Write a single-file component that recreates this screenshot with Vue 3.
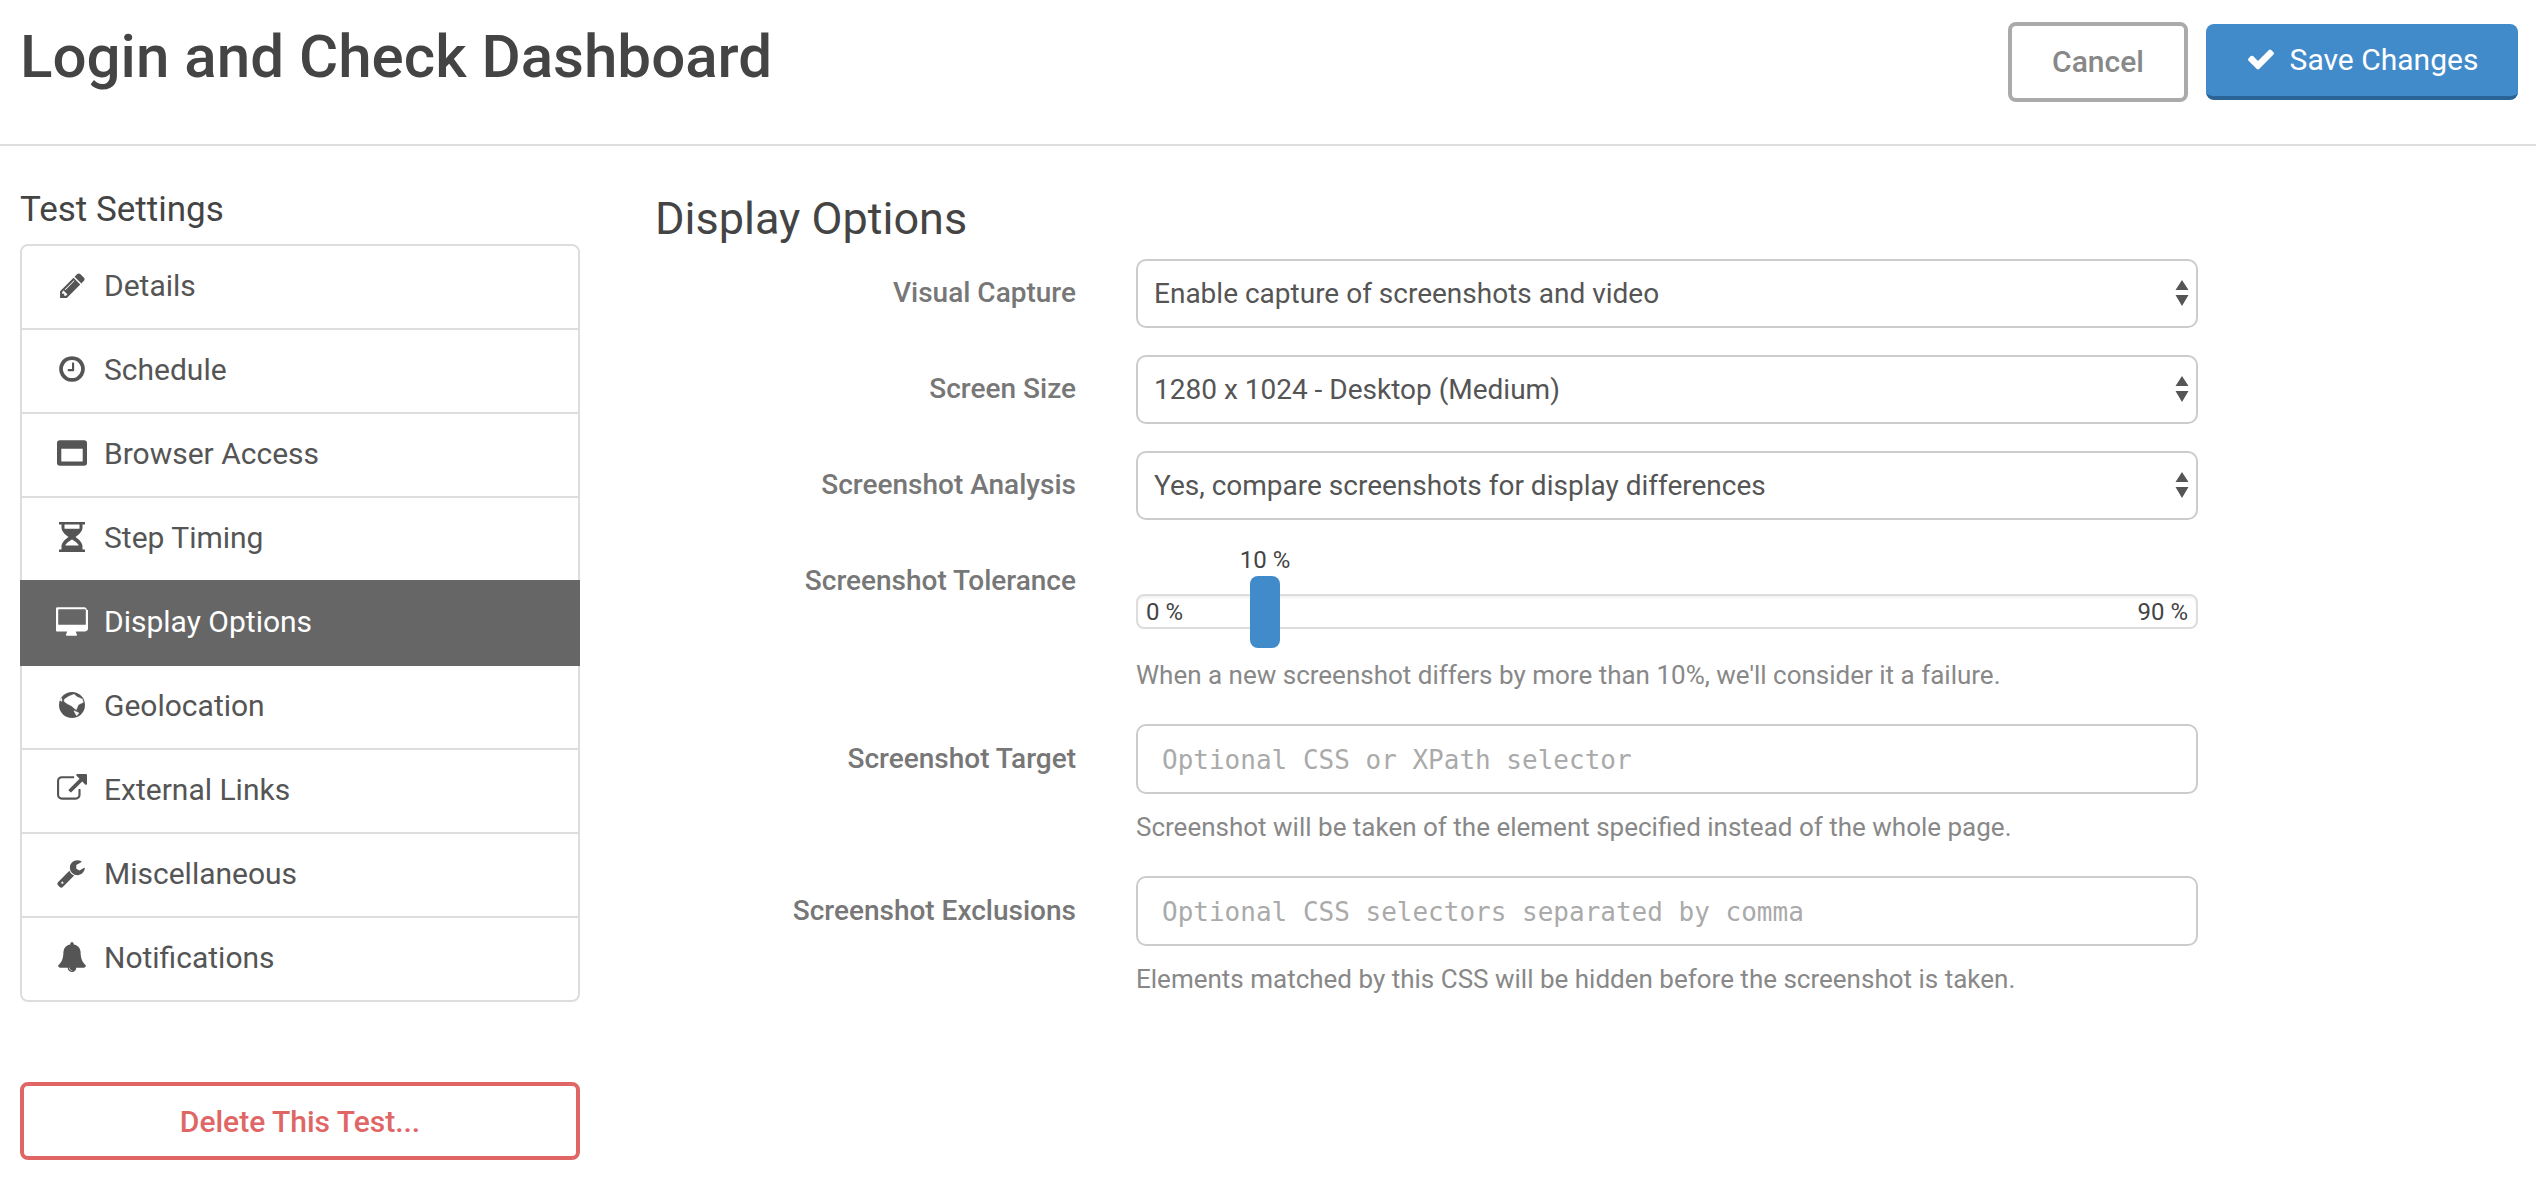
<script setup>
const nav = [
  { label: 'Details', icon: 'pencil' },
  { label: 'Schedule', icon: 'clock' },
  { label: 'Browser Access', icon: 'window' },
  { label: 'Step Timing', icon: 'hourglass' },
  { label: 'Display Options', icon: 'desktop', active: true },
  { label: 'Geolocation', icon: 'globe' },
  { label: 'External Links', icon: 'external' },
  { label: 'Miscellaneous', icon: 'wrench' },
  { label: 'Notifications', icon: 'bell' }
]
const selects = [
  { label: 'Visual Capture', value: 'Enable capture of screenshots and video' },
  { label: 'Screen Size', value: '1280 x 1024 - Desktop (Medium)' },
  { label: 'Screenshot Analysis', value: 'Yes, compare screenshots for display differences' }
]
const inputs = [
  { label: 'Screenshot Target', placeholder: 'Optional CSS or XPath selector', help: 'Screenshot will be taken of the element specified instead of the whole page.' },
  { label: 'Screenshot Exclusions', placeholder: 'Optional CSS selectors separated by comma', help: 'Elements matched by this CSS will be hidden before the screenshot is taken.' }
]
</script>

<template>
  <div class="page">
    <header class="header">
      <h1 class="title">Login and Check Dashboard</h1>
      <div class="actions">
        <button class="btn cancel">Cancel</button>
        <button class="btn save">
          <svg class="check" viewBox="0 0 1792 1792"><path d="M1671 566q0 40-28 68l-724 724-136 136q-28 28-68 28t-68-28l-136-136-362-362q-28-28-28-68t28-68l136-136q28-28 68-28t68 28l294 295 656-657q28-28 68-28t68 28l136 136q28 28 28 68z"/></svg>
          Save Changes
        </button>
      </div>
    </header>

    <div class="body">
      <aside class="sidebar">
        <h2 class="side-title">Test Settings</h2>
        <ul class="nav">
          <li v-for="item in nav" :key="item.label" class="nav-item" :class="{ active: item.active }">
            <span class="nav-icon">
              <svg v-if="item.icon === 'pencil'" width="29" height="29" viewBox="0 0 1792 1792"><path d="M491 1536l91-91-235-235-91 91v107h128v128h107zm523-928q0-22-22-22-10 0-17 7l-542 542q-7 7-7 17 0 22 22 22 10 0 17-7l542-542q7-7 7-17zm-54-192l416 416-832 832h-416v-416zm683 96q0 53-37 90l-166 166-416-416 166-165q36-38 90-38 53 0 91 38l235 234q37 39 37 91z"/></svg>
              <svg v-else-if="item.icon === 'clock'" width="30" height="30" viewBox="0 0 1792 1792"><path d="M1024 544v448q0 14-9 23t-23 9h-320q-14 0-23-9t-9-23v-64q0-14 9-23t23-9h224v-352q0-14 9-23t23-9h64q14 0 23 9t9 23zm416 352q0-148-73-273t-198-198-273-73-273 73-198 198-73 273 73 273 198 198 273 73 273-73 198-198 73-273zm224 0q0 209-103 385.500t-279.500 279.500-385.500 103-385.500-103-279.500-279.500-103-385.500 103-385.500 279.500-279.500 385.500-103 385.500 103 279.500 279.500 103 385.500z"/></svg>
              <svg v-else-if="item.icon === 'window'" width="30" height="30" viewBox="0 0 1792 1792"><path d="M256 1408h1280v-768h-1280v768zm1536-1120v1216q0 66-47 113t-113 47h-1472q-66 0-113-47t-47-113v-1216q0-66 47-113t113-47h1472q66 0 113 47t47 113z"/></svg>
              <svg v-else-if="item.icon === 'hourglass'" width="26" height="30" viewBox="0 0 26 30"><path d="M0 0h26v2.500h-2.500v3c0 4-3.500 7-7 9.500 3.500 2.500 7 5.500 7 9.500v3H26V30H0v-2.500h2.500v-3c0-4 3.500-7 7-9.500-3.500-2.500-7-5.500-7-9.500v-3H0z"/><path fill="#fff" d="M5.500 2.500h15v3c0 .5 0 .7-.1 1.200H5.600c-.1-.5-.1-.7-.1-1.200zM13 17.500c-3.500 2-6 4-6.800 6h13.600c-.8-2-3.300-4-6.800-6z"/></svg>
              <svg v-else-if="item.icon === 'desktop'" width="32" height="29" viewBox="0 0 1856 1664"><path d="M1728 992v-832q0-13-9.500-22.500t-22.500-9.500h-1536q-13 0-22.500 9.500t-9.500 22.500v832q0 13 9.500 22.500t22.500 9.500h1536q13 0 22.500-9.500t9.500-22.500zm128-832v1088q0 66-47 113t-113 47h-544q0 37 16 77.500t32 71 16 43.500q0 26-19 45t-45 19h-512q-26 0-45-19t-19-45q0-14 16-44t32-70 16-78h-544q-66 0-113-47t-47-113v-1088q0-66 47-113t113-47h1536q66 0 113 47t47 113z"/></svg>
              <svg v-else-if="item.icon === 'globe'" width="26" height="26" viewBox="0 0 26 26"><circle cx="13" cy="13" r="13"/><path fill="#fff" stroke="#fff" stroke-width=".5" stroke-linejoin="round" d="M5.700 7L10 4.300 15 2.300l3.300 2.700 5 2 1 3.300-5 2.400-2 5-2.300-1.700-2.700-2.300-4-2-3.300-2.400zM15 18.700l5 2.300-2.300 2.700-1.700-2.700zM.7 8.300L2.700 6 3 9.300z"/></svg>
              <svg v-else-if="item.icon === 'external'" width="30" height="30" viewBox="0 0 1792 1792"><path d="M1408 928v320q0 119-84.500 203.500t-203.500 84.500h-832q-119 0-203.500-84.500t-84.500-203.500v-832q0-119 84.500-203.500t203.500-84.500h704q14 0 23 9t9 23v64q0 14-9 23t-23 9h-704q-66 0-113 47t-47 113v832q0 66 47 113t113 47h832q66 0 113-47t47-113v-320q0-14 9-23t23-9h64q14 0 23 9t9 23zm384-864v512q0 26-19 45t-45 19-45-19l-176-176-652 652q-10 10-23 10t-23-10l-114-114q-10-10-10-23t10-23l652-652-176-176q-19-19-19-45t19-45 45-19h512q26 0 45 19t19 45z"/></svg>
              <svg v-else-if="item.icon === 'wrench'" width="30" height="30" viewBox="0 0 1792 1792"><path d="M384 1472q0-26-19-45t-45-19-45 19-19 45 19 45 45 19 45-19 19-45zm644-420l-682 682q-37 37-90 37-52 0-91-37l-106-108q-38-36-38-90 0-53 38-91l681-681q39 98 114.500 173.500t173.500 114.500zm634-435q0 39-23 106-47 134-164.500 217.500t-258.500 83.500q-185 0-316.500-131.500t-131.500-316.500 131.500-316.500 316.500-131.500q58 0 121.500 16.500t107.500 46.500q16 11 16 28t-16 28l-293 169v224l193 107q5-3 79-48.500t135.500-81 70.500-35.500q15 0 23.500 10t8.500 25z"/></svg>
              <svg v-else-if="item.icon === 'bell'" width="30" height="32" viewBox="0 0 1792 1792"><path d="M912 1696q0-16-16-16-59 0-101.500-42.500t-42.500-101.500q0-16-16-16t-16 16q0 73 51.500 124.500t124.500 51.500q16 0 16-16zm816-288q0 52-38 90t-90 38h-448q0 106-75 181t-181 75-181-75-75-181h-448q-52 0-90-38t-38-90q50-42 91-88t85-119.500 74.500-158.500 50-206 19.500-260q0-152 117-282.500t307-158.500q-8-19-8-39 0-40 28-68t68-28 68 28 28 68q0 20-8 39 190 28 307 158.500t117 282.500q0 139 19.500 260t50 206 74.500 158.500 85 119.500 91 88z"/></svg>
            </span>
            {{ item.label }}
          </li>
        </ul>
        <button class="btn delete">Delete This Test...</button>
      </aside>

      <main class="main">
        <h2 class="main-title">Display Options</h2>
        <div class="form">
          <div v-for="s in selects" :key="s.label" class="row">
            <label class="label">{{ s.label }}</label>
            <div class="control">
              <div class="select-wrap">
                <select class="field select"><option>{{ s.value }}</option></select>
                <svg class="arrows" width="14" height="26" viewBox="0 0 14 26"><path d="M7 0l6.500 10H.500zM.500 15h13L7 26z"/></svg>
              </div>
            </div>
          </div>

          <div class="row slider-row">
            <label class="label">Screenshot Tolerance</label>
            <div class="control">
              <div class="slider">
                <span class="slider-min">0 %</span>
                <span class="slider-max">90 %</span>
                <span class="slider-handle"></span>
                <span class="slider-value">10 %</span>
              </div>
              <p class="help slider-help">When a new screenshot differs by more than 10%, we'll consider it a failure.</p>
            </div>
          </div>

          <div v-for="f in inputs" :key="f.label" class="row input-row">
            <label class="label">{{ f.label }}</label>
            <div class="control">
              <input class="field input" :placeholder="f.placeholder" />
              <p class="help">{{ f.help }}</p>
            </div>
          </div>
        </div>
      </main>
    </div>
  </div>
</template>

<style>
html, body { margin: 0; background: #fff; }
</style>

<style scoped>
.page {
  width: 2536px;
  height: 1184px;
  overflow: hidden;
  font-family: Roboto, "Liberation Sans", sans-serif;
  color: #555;
  background: #fff;
}
.header {
  display: flex;
  justify-content: space-between;
  align-items: flex-start;
  height: 144px;
  padding: 0 18px 0 20px;
  border-bottom: 2px solid #ddd;
}
.title {
  margin: 22px 0 0;
  font-size: 60.1px;
  line-height: 70px;
  font-weight: 500;
  color: #444;
}
.actions {
  display: flex;
  gap: 18px;
  align-items: flex-start;
  padding-top: 22px;
}
.btn {
  box-sizing: border-box;
  font-family: inherit;
  background: #fff;
  border-radius: 8px;
  font-size: 30px;
  padding: 0;
}
.cancel {
  width: 180px;
  height: 80px;
  border: 4px solid #aaa;
  color: #888;
  font-weight: 500;
  padding-bottom: 2px;
}
.save {
  display: flex;
  align-items: center;
  justify-content: center;
  gap: 14px;
  margin-top: 2px;
  width: 312px;
  height: 76px;
  border: 0;
  border-bottom: 4px solid #2a6496;
  background: #428bca;
  color: #fff;
  padding-bottom: 2px;
}
.check { width: 30px; height: 30px; fill: #fff; }

.body { display: flex; }
.sidebar { width: 560px; margin-left: 20px; flex: none; }
.side-title {
  margin: 44px 0 14px;
  font-size: 35px;
  line-height: 40px;
  font-weight: 400;
  color: #444;
}
.nav {
  list-style: none;
  margin: 0;
  padding: 0;
  border: 2px solid #ddd;
  border-radius: 8px;
}
.nav-item {
  box-sizing: border-box;
  display: flex;
  align-items: center;
  height: 84px;
  padding-left: 32px;
  padding-bottom: 4px;
  border-bottom: 2px solid #ddd;
  font-size: 30px;
  color: #555;
}
.nav-item:last-child { border-bottom: 0; height: 82px; }
.nav-item.active {
  height: 86px;
  margin: -2px -2px 0;
  padding-left: 34px;
  padding-top: 2px;
  background: #666;
  border-bottom-color: #666;
  color: #fff;
}
.nav-icon {
  width: 52px;
  display: flex;
  justify-content: center;
  align-items: center;
  margin-left: -8px;
  margin-right: 6px;
  fill: #555;
}
.active .nav-icon { fill: #fff; }
.delete {
  display: block;
  width: 100%;
  height: 78px;
  margin-top: 80px;
  border: 4px solid #e06666;
  color: #e06666;
  font-weight: 500;
}

.main { margin-left: 75px; flex: 1; }
.main-title {
  margin: 48px 0 15px;
  font-size: 45px;
  line-height: 50px;
  font-weight: 400;
  color: #444;
}
.row {
  display: flex;
  margin-bottom: 27px;
}
.slider-row { margin-bottom: 29px; }
.input-row { margin-bottom: 29px; }
.label {
  width: 421px;
  flex: none;
  margin-right: 60px;
  padding-top: 14px;
  text-align: right;
  font-size: 28px;
  line-height: 40px;
  font-weight: 500;
  color: #777;
}
.input-row .label { padding-top: 15px; }
.control { width: 1062px; }
.field {
  box-sizing: border-box;
  display: block;
  width: 100%;
  height: 69px;
  border: 2px solid #ccc;
  border-radius: 10px;
  background: #fff;
  outline: 0;
}
.select-wrap { position: relative; }
.select {
  appearance: none;
  padding: 0 16px;
  font-family: inherit;
  font-size: 28px;
  color: #555;
}
.arrows {
  position: absolute;
  right: 9px;
  top: 21px;
  fill: #555;
}
.input {
  height: 70px;
  padding: 2px 24px 0;
  font-family: "DejaVu Sans Mono", "Liberation Mono", monospace;
  font-size: 26px;
}
.input::placeholder { color: #aaa; opacity: 1; }
.help {
  margin: 13px 0 0;
  font-size: 26px;
  line-height: 40px;
  color: #888;
}
.slider-help { margin-top: 26px; }
.slider {
  position: relative;
  box-sizing: border-box;
  height: 35px;
  margin-top: 47px;
  border: 2px solid #ddd;
  border-radius: 8px;
  box-shadow: inset 0 2px 2px rgba(0, 0, 0, 0.05);
  font-size: 24px;
  color: #444;
  line-height: 32px;
}
.slider-min { position: absolute; left: 8px; top: 0; }
.slider-max { position: absolute; right: 8px; top: 0; }
.slider-handle {
  position: absolute;
  left: 112px;
  top: -20px;
  width: 30px;
  height: 72px;
  border-radius: 8px;
  background: #428bca;
}
.slider-value {
  position: absolute;
  left: 127px;
  top: -52px;
  transform: translateX(-50%);
  white-space: nowrap;
}
</style>
